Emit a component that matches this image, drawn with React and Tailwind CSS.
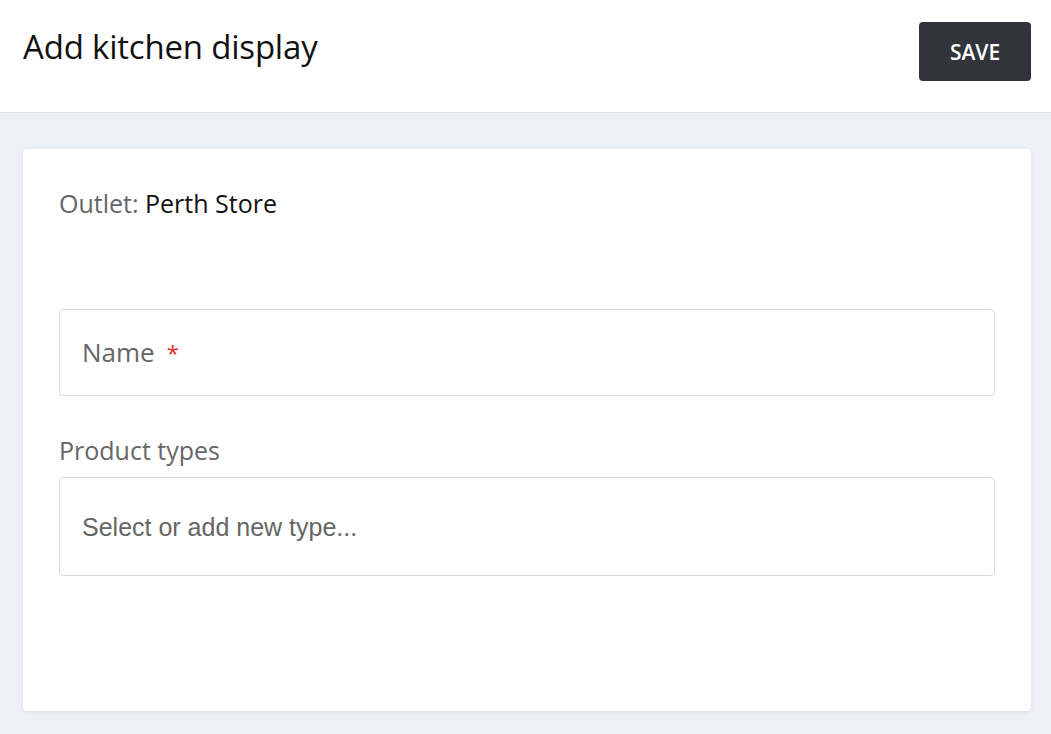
import React from 'react';

export default function App() {
  return (
    <div className="min-h-screen bg-[#edf0f5] font-['Open_Sans',sans-serif]">
      <header className="h-[113px] bg-white border-b border-[#dfe2e6] flex items-start justify-between pl-[23px] pr-[20px]">
        <h1 className="mt-[25px] text-[33px] leading-[44px] text-[#111] tracking-[-0.2px]">Add kitchen display</h1>
        <button className="mt-[22px] w-[112px] h-[59px] pt-[3px] rounded-[4px] bg-[#31353b] text-white text-[21px] font-semibold">
          SAVE
        </button>
      </header>

      <div className="pl-[23px] pr-[20px] pt-[36px] pb-[22px]">
        <div className="bg-white rounded-[4px] shadow-[0_1px_4px_rgba(0,0,0,0.08)] h-[562px] px-[36px] pt-[37px]">
          <p className="text-[25px] leading-[34px]">
            <span className="text-[#666]">Outlet: </span>
            <span className="text-[#111]">Perth Store</span>
          </p>

          <div className="mt-[89px] h-[87px] border border-[#d5dddd] rounded-[4px] flex items-center px-[22px]">
            <span className="text-[26px] text-[#666]">Name</span>
            <span className="ml-[12px] text-[22px] text-[#e0292b]">*</span>
          </div>

          <p className="mt-[37px] text-[25px] leading-[34px] text-[#666]">Product types</p>

          <div className="mt-[10px] h-[99px] border border-[#d5dddd] rounded-[4px] flex items-center px-[22px] pt-[2px]">
            <span className="text-[25px] text-[#666] font-['Liberation_Sans',Arial,sans-serif]">Select or add new type...</span>
          </div>
        </div>
      </div>
    </div>
  );
}
